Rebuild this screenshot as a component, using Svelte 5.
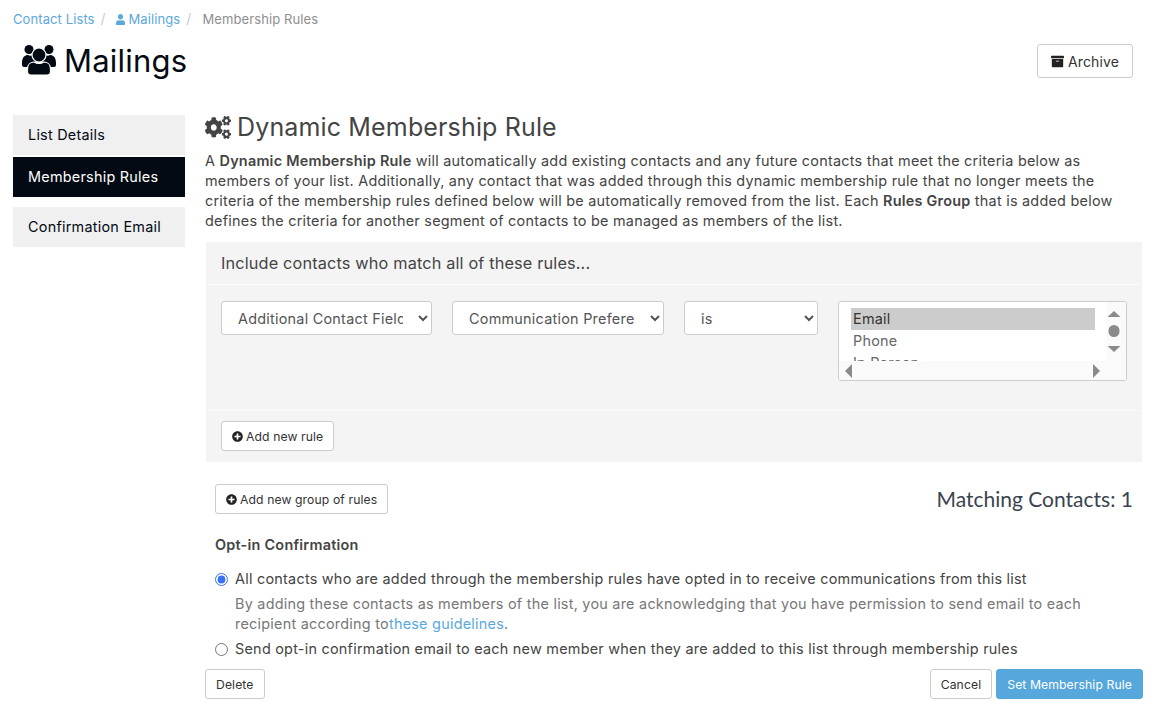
<script>
  const user = "M224 256c70.7 0 128-57.3 128-128S294.7 0 224 0 96 57.3 96 128s57.3 128 128 128zm89.6 32h-16.7c-22.2 10.2-46.9 16-72.9 16s-50.6-5.8-72.9-16h-16.7C60.2 288 0 348.2 0 422.4V464c0 26.5 21.5 48 48 48h352c26.5 0 48-21.5 48-48v-41.6c0-74.2-60.2-134.4-134.4-134.4z";
  const archive = "M32 448c0 17.7 14.3 32 32 32h384c17.7 0 32-14.3 32-32V160H32v288zm160-212c0-6.6 5.4-12 12-12h104c6.6 0 12 5.4 12 12v8c0 6.6-5.4 12-12 12H204c-6.6 0-12-5.4-12-12v-8zM480 32H32C14.3 32 0 46.3 0 64v48c0 8.8 7.2 16 16 16h480c8.8 0 16-7.2 16-16V64c0-17.7-14.3-32-32-32z";
  const plus = "M256 8C119 8 8 119 8 256s111 248 248 248 248-111 248-248S393 8 256 8zm144 276c0 6.6-5.4 12-12 12h-92v92c0 6.6-5.4 12-12 12h-56c-6.6 0-12-5.4-12-12v-92h-92c-6.6 0-12-5.4-12-12v-56c0-6.6 5.4-12 12-12h92v-92c0-6.6 5.4-12 12-12h56c6.6 0 12 5.4 12 12v92h92c6.6 0 12 5.4 12 12v56z";
  const cogs = "M512.1 191l-8.2 14.3c-3 5.3-9.4 7.5-15.1 5.4-11.8-4.4-22.6-10.7-32.1-18.6-4.6-3.8-5.8-10.5-2.8-15.7l8.2-14.3c-6.9-8-12.3-17.3-15.9-27.4h-16.5c-6 0-11.2-4.3-12.2-10.3-2-12-2.1-24.6 0-37.1 1-6 6.2-10.4 12.2-10.4h16.5c3.6-10.1 9-19.4 15.9-27.4l-8.2-14.3c-3-5.2-1.9-11.9 2.8-15.7 9.5-7.9 20.4-14.2 32.1-18.6 5.7-2.1 12.1.1 15.1 5.4l8.2 14.3c10.5-1.9 21.2-1.9 31.7 0L552 6.3c3-5.3 9.4-7.5 15.1-5.4 11.8 4.4 22.6 10.7 32.1 18.6 4.6 3.8 5.8 10.5 2.8 15.7l-8.2 14.3c6.9 8 12.3 17.3 15.9 27.4h16.5c6 0 11.2 4.3 12.2 10.3 2 12 2.1 24.6 0 37.1-1 6-6.2 10.4-12.2 10.4h-16.5c-3.6 10.1-9 19.4-15.9 27.4l8.2 14.3c3 5.2 1.9 11.9-2.8 15.7-9.5 7.9-20.4 14.2-32.1 18.6-5.7 2.1-12.1-.1-15.1-5.4l-8.2-14.3c-10.4 1.9-21.2 1.9-31.7 0zm-10.5-58.8c38.5 29.6 82.4-14.3 52.8-52.8-38.5-29.7-82.4 14.3-52.8 52.8zM386.3 286.1l33.7 16.8c10.1 5.8 14.5 18.1 10.5 29.1-8.9 24.2-26.4 46.4-42.6 65.8-7.4 8.9-20.2 11.1-30.3 5.3l-29.1-16.8c-16 13.7-34.6 24.6-54.9 31.7v33.6c0 11.6-8.3 21.6-19.7 23.6-24.6 4.2-50.4 4.4-75.9 0-11.5-2-20-11.9-20-23.6V418c-20.3-7.2-38.9-18-54.9-31.7L74 403c-10 5.8-22.9 3.6-30.3-5.3-16.2-19.4-33.3-41.6-42.2-65.7-4-10.9.4-23.2 10.5-29.1l33.3-16.8c-3.9-20.9-3.9-42.4 0-63.4L12 205.8c-10.1-5.8-14.6-18.1-10.5-29 8.9-24.2 26-46.4 42.2-65.8 7.4-8.9 20.2-11.1 30.3-5.3l29.1 16.8c16-13.7 34.6-24.6 54.9-31.7V57.1c0-11.5 8.2-21.5 19.6-23.5 24.6-4.2 50.5-4.4 76-.1 11.5 2 20 11.9 20 23.6v33.6c20.3 7.2 38.9 18 54.9 31.7l29.1-16.8c10-5.8 22.9-3.6 30.3 5.3 16.2 19.4 33.2 41.6 42.1 65.8 4 10.9.1 23.2-10 29.1l-33.7 16.8c3.9 21 3.9 42.5 0 63.5zm-117.6 21.1c59.2-77-28.7-164.9-105.7-105.7-59.2 77 28.7 164.9 105.7 105.7zm243.4 182.7l-8.2 14.3c-3 5.3-9.4 7.5-15.1 5.4-11.8-4.4-22.6-10.7-32.1-18.6-4.6-3.8-5.8-10.5-2.8-15.7l8.2-14.3c-6.9-8-12.3-17.3-15.9-27.4h-16.5c-6 0-11.2-4.3-12.2-10.3-2-12-2.1-24.6 0-37.1 1-6 6.2-10.4 12.2-10.4h16.5c3.6-10.1 9-19.4 15.9-27.4l-8.2-14.3c-3-5.2-1.9-11.9 2.8-15.7 9.5-7.9 20.4-14.2 32.1-18.6 5.7-2.1 12.1.1 15.1 5.4l8.2 14.3c10.5-1.9 21.2-1.9 31.7 0l8.2-14.3c3-5.3 9.4-7.5 15.1-5.4 11.8 4.4 22.6 10.7 32.1 18.6 4.6 3.8 5.8 10.5 2.8 15.7l-8.2 14.3c6.9 8 12.3 17.3 15.9 27.4h16.5c6 0 11.2 4.3 12.2 10.3 2 12 2.1 24.6 0 37.1-1 6-6.2 10.4-12.2 10.4h-16.5c-3.6 10.1-9 19.4-15.9 27.4l8.2 14.3c3 5.2 1.9 11.9-2.8 15.7-9.5 7.9-20.4 14.2-32.1 18.6-5.7 2.1-12.1-.1-15.1-5.4l-8.2-14.3c-10.4 1.9-21.2 1.9-31.7 0zM501.6 431c38.5 29.6 82.4-14.3 52.8-52.8-38.5-29.6-82.4 14.3-52.8 52.8z";
</script>

<div class="page">
  <nav class="crumbs">
    <a href="#a">Contact Lists</a><span class="sep">/</span>
    <a class="second" href="#b"><svg class="i-user" viewBox="0 0 448 512" preserveAspectRatio="none"><path d={user} /></svg> Mailings</a><span class="sep">/</span>
    <span class="current">Membership Rules</span>
  </nav>

  <header class="top">
    <h1>
      <svg class="i-users" viewBox="0 0 34 30">
        <circle cx="7" cy="4.5" r="4.5" />
        <circle cx="27" cy="4.5" r="4.5" />
        <path d="M0 18 C0 12 3 10 6 10 Q8 11.5 11 10 L14 18 L6 22 L2 22 Q0 22 0 20 Z" />
        <path d="M34 18 C34 12 31 10 28 10 Q26 11.5 23 10 L20 18 L28 22 L32 22 Q34 22 34 20 Z" />
        <circle class="halo" cx="17" cy="10" r="7" />
        <path class="halo" d="M9 30 Q5.5 30 5.5 26.5 L5.5 24 C5.5 19 9 17 12 17 Q17 20 22 17 C25 17 28.5 19 28.5 24 L28.5 26.5 Q28.5 30 25 30 Z" />
      </svg>Mailings
    </h1>
    <button class="btn archive"><svg class="i-archive" viewBox="0 0 512 512"><path d={archive} /></svg>Archive</button>
  </header>

  <div class="columns">
    <aside class="side">
      <a class="tab" href="#l">List Details</a>
      <a class="tab active" href="#m">Membership Rules</a>
      <a class="tab" href="#c">Confirmation Email</a>
    </aside>

    <main class="main">
      <h2><svg class="i-cogs" viewBox="0 0 640 512" preserveAspectRatio="none"><path d={cogs} /></svg>Dynamic Membership Rule</h2>
      <p class="intro">
        <span>A <b>Dynamic Membership Rule</b> will automatically add existing contacts and any future contacts that meet the criteria below as</span>
        <span>members of your list. Additionally, any contact that was added through this dynamic membership rule that no longer meets the</span>
        <span>criteria of the membership rules defined below will be automatically removed from the list. Each <b>Rules Group</b> that is added below</span>
        <span>defines the criteria for another segment of contacts to be managed as members of the list.</span>
      </p>

      <section class="panel">
        <div class="panel-head">Include contacts who match all of these rules...</div>
        <div class="panel-body">
          <select class="sel s1"><option>Additional Contact Fields</option></select>
          <select class="sel s2"><option>Communication Preference</option></select>
          <select class="sel s3"><option>is</option></select>
          <div class="listbox">
            <div class="options">
              <div class="opt picked">Email</div>
              <div class="opt">Phone</div>
              <div class="opt">In Person</div>
            </div>
            <div class="vbar">
              <svg viewBox="0 0 14 56" width="14" height="56">
                <path d="M0.5 15 L7 9 L13.5 15 Z" />
                <rect x="1.5" y="23" width="11" height="12" rx="5.5" fill="#8a8a8a" />
                <path d="M0.5 44 L13.5 44 L7 50 Z" />
              </svg>
            </div>
            <div class="hbar">
              <svg viewBox="0 0 7 14" width="7" height="14"><path d="M0 7 L7 0 L7 14 Z" /></svg>
              <svg viewBox="0 0 7 14" width="7" height="14"><path d="M7 7 L0 0 L0 14 Z" /></svg>
            </div>
          </div>
        </div>
        <div class="panel-foot">
          <button class="btn small"><svg class="i-plus" viewBox="0 0 512 512"><path d={plus} /></svg>Add new rule</button>
        </div>
      </section>

      <div class="group-row">
        <button class="btn small"><svg class="i-plus" viewBox="0 0 512 512"><path d={plus} /></svg>Add new group of rules</button>
        <div class="matching">Matching Contacts: 1</div>
      </div>

      <div class="optin">
        <h3>Opt-in Confirmation</h3>
        <label class="radio r1"><input type="radio" name="o" checked /><span>All contacts who are added through the membership rules have opted in to receive communications from this list</span></label>
        <p class="help">
          <span>By adding these contacts as members of the list, you are acknowledging that you have permission to send email to each</span>
          <span>recipient according to<a href="#g">these guidelines</a>.</span>
        </p>
        <label class="radio r2"><input type="radio" name="o" /><span>Send opt-in confirmation email to each new member when they are added to this list through membership rules</span></label>
      </div>

      <footer class="foot">
        <button class="btn small">Delete</button>
        <div class="foot-right">
          <button class="btn small">Cancel</button>
          <button class="btn small primary">Set Membership Rule</button>
        </div>
      </footer>
    </main>
  </div>
</div>

<style>
  :global(body) {
    margin: 0;
    background: #fff;
    font-family: "Inter", "Noto Sans", sans-serif;
    color: #444;
  }
  .page {
    height: 726px;
    box-sizing: border-box;
    padding: 9px 31px 0 13px;
    overflow: hidden;
    font-size: 14.4px;
    letter-spacing: 0.25px;
    line-height: 20px;
  }
  a { color: #5ba8dd; text-decoration: none; }
  svg path { fill: currentColor; }
  .vbar path, .hbar path { fill: #8a8a8a; }

  .crumbs { display: flex; align-items: center; height: 20px; font-size: 13px; letter-spacing: 0.1px; white-space: nowrap; }
  .sep { color: #ccc; margin: 0 0 0 6px; font-size: 14px; }
  .second { margin-left: 10px; }
  .current { margin-left: 11px; color: #8e8e8e; }
  .i-user { width: 9px; height: 11px; display: inline-block; vertical-align: -1px; }

  .top { display: flex; justify-content: space-between; padding: 12px 10px 0 9px; height: 78px; box-sizing: border-box; }
  h1 { margin: 0; font-weight: 400; font-size: 31px; line-height: 40px; height: 40px; color: #030a13; display: flex; align-items: center; letter-spacing: 0.2px; }
  .i-users { width: 34px; height: 30px; margin-right: 8px; color: #030a13; flex: none; position: relative; top: -1px; }
  .i-users circle { fill: currentColor; }
  .i-users .halo { stroke: #fff; stroke-width: 1.2; }

  .btn {
    font-family: inherit;
    background: #fff;
    border: 1px solid #ccc;
    border-radius: 3px;
    color: #333;
    cursor: pointer;
    box-sizing: border-box;
    white-space: nowrap;
  }
  .archive { width: 96px; height: 34px; font-size: 14px; margin-top: 3px; padding: 0; letter-spacing: 0.1px; }
  .i-archive { width: 13px; height: 13px; vertical-align: -1.5px; margin-right: 4px; color: #222; }

  .columns { display: flex; gap: 20px; margin-top: 8px; }
  .side { width: 172px; flex: none; display: flex; flex-direction: column; }
  .tab { display: flex; align-items: center; height: 40px; padding-left: 15px; background: #f0f0f0; color: #030a13; margin-bottom: 2px; }
  .tab.active { background: #030a13; color: #fff; margin-bottom: 10px; }

  .main { flex: 1; min-width: 0; }
  h2 { margin: -1px 0 0; font-weight: 400; font-size: 25px; line-height: 26px; height: 26px; color: #444; display: flex; align-items: center; letter-spacing: 0.15px; }
  .i-cogs { width: 26px; height: 23px; margin-right: 6px; color: #444; flex: none; }
  .intro { margin: 11px 0 0; white-space: nowrap; }
  .intro span { display: block; }
  .intro b, h3 { font-weight: 600; }

  .panel { margin: 11px 1px 0; background: #f4f4f4; height: 220px; display: flex; flex-direction: column; }
  .panel-head { height: 43px; box-sizing: border-box; padding: 0 15px; display: flex; align-items: center; font-size: 16.3px; letter-spacing: 0.15px; border-bottom: 1px solid #fbfbfb; }
  .panel-body { flex: none; height: 126px; box-sizing: border-box; padding: 16px 15px 0; display: flex; gap: 20px; border-bottom: 1px solid #fbfbfb; }
  .panel-foot { padding: 10px 15px 0; }

  .sel {
    height: 34px;
    box-sizing: border-box;
    border: 1px solid #ccc;
    border-radius: 3px;
    background: #fff;
    color: #555;
    font-family: inherit;
    font-size: 14.4px;
    letter-spacing: 0.25px;
    padding: 0 12px;
    flex: none;
  }
  .s1 { width: 211px; }
  .s2 { width: 212px; }
  .s3 { width: 134px; }

  .listbox {
    position: relative;
    width: 289px;
    height: 80px;
    box-sizing: border-box;
    border: 1px solid #ccc;
    border-radius: 3px;
    background: #fff;
    overflow: hidden;
  }
  .options { padding: 6px 0 0 12px; width: 244px; height: 53px; overflow: hidden; }
  .opt { height: 22px; line-height: 22px; padding-left: 2px; color: #666; }
  .picked { background: #cccccc; color: #333; }
  .vbar { position: absolute; right: 0; top: 0; bottom: 0; width: 19px; background: #fafafa; }
  .hbar { position: absolute; left: 0; right: 0; bottom: 0; height: 19px; background: #fafafa; display: flex; justify-content: space-between; align-items: center; padding: 0 26px 0 6px; box-sizing: border-box; }

  .small { font-size: 12.2px; letter-spacing: 0.1px; height: 30px; padding: 0 10px; display: inline-flex; align-items: center; }
  .i-plus { width: 11px; height: 11px; margin-right: 3px; color: #222; flex: none; }

  .group-row { display: flex; justify-content: space-between; align-items: center; margin: 22px 10px 0; height: 30px; }
  .matching { font-family: "Lato", sans-serif; font-size: 21px; color: #3a4450; letter-spacing: 0; }

  .optin { margin: 0 10px; }
  h3 { margin: 21px 0 0; font-size: 14.4px; line-height: 20px; color: #444; }
  .radio { display: flex; align-items: center; gap: 7px; height: 20px; white-space: nowrap; }
  .r1 { margin-top: 14px; }
  .radio input { width: 13px; height: 13px; margin: 0; accent-color: #3a72f5; flex: none; }
  .help { margin: 5px 0 0 20px; color: #777; white-space: nowrap; }
  .help span { display: block; }
  .r2 { margin-top: 5px; }

  .foot { display: flex; justify-content: space-between; margin-top: 10px; }
  .foot-right { display: flex; gap: 4px; }
  .primary { background: #56a7dc; border-color: #56a7dc; color: #fff; }
</style>
